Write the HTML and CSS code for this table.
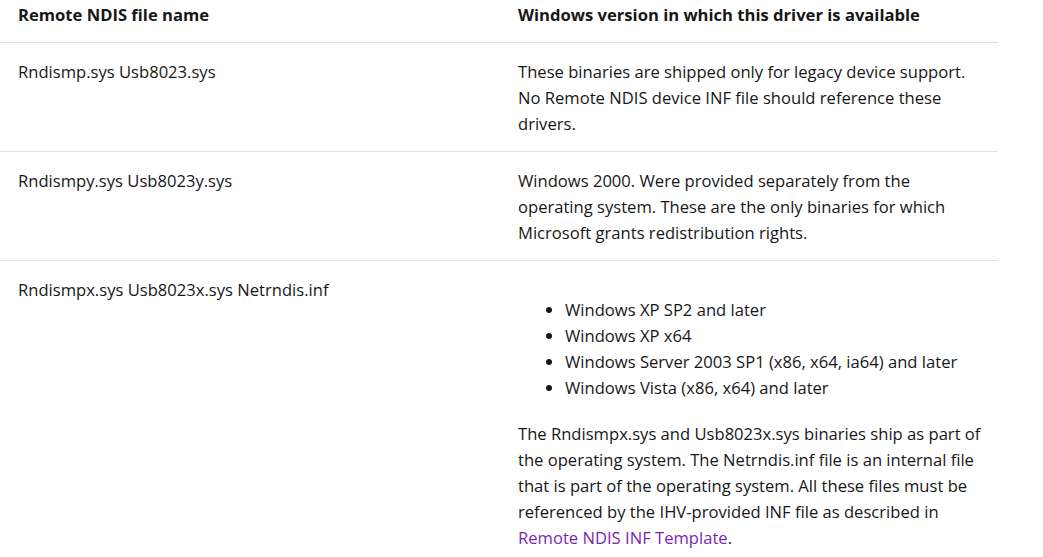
FILE: index.html
```html
<!DOCTYPE html>
<html lang="en">
<head>
<meta charset="utf-8">
<title>Remote NDIS drivers</title>
<link rel="stylesheet" href="styles.css">
</head>
<body>
<table class="drivers">
  <thead>
    <tr>
      <th class="col-name">Remote NDIS file name</th>
      <th class="col-version">Windows version in which this driver is available</th>
    </tr>
  </thead>
  <tbody>
    <tr>
      <td>Rndismp.sys Usb8023.sys</td>
      <td>These binaries are shipped only for legacy device support. No Remote NDIS device INF file should reference these drivers.</td>
    </tr>
    <tr>
      <td>Rndismpy.sys Usb8023y.sys</td>
      <td>Windows 2000. Were provided separately from the operating system. These are the only binaries for which Microsoft grants redistribution rights.</td>
    </tr>
    <tr>
      <td>Rndismpx.sys Usb8023x.sys Netrndis.inf</td>
      <td>
        <ul class="versions">
          <li>Windows XP SP2 and later</li>
          <li>Windows XP x64</li>
          <li>Windows Server 2003 SP1 (x86, x64, ia64) and later</li>
          <li>Windows Vista (x86, x64) and later</li>
        </ul>
        <p class="note">The Rndismpx.sys and Usb8023x.sys binaries ship as part of the operating system. The Netrndis.inf file is an internal file that is part of the operating system. All these files must be referenced by the IHV-provided INF file as described in <a class="visited-link" href="#">Remote NDIS INF Template</a>.</p>
      </td>
    </tr>
  </tbody>
</table>
</body>
</html>
```

FILE: styles.css
```css
html, body {
  margin: 0;
  padding: 0;
  background: #ffffff;
}

body {
  font-family: "Open Sans", "Noto Sans", "Liberation Sans", sans-serif;
  font-size: 16.6px;
  line-height: 26px;
  color: #171717;
}

.drivers {
  border-collapse: collapse;
  width: 998px;
  table-layout: fixed;
}

.drivers th,
.drivers td {
  text-align: left;
  vertical-align: top;
  padding: 16px 14px 14px 18px;
  border-bottom: 1px solid #e1e1e1;
}

.drivers th {
  font-weight: 700;
  padding-top: 2px;
  padding-bottom: 14px;
}

.col-name {
  width: 468px;
}

.versions {
  margin: 20px 0;
  padding-left: 47px;
}

.note {
  margin: 0;
}

.visited-link {
  color: #7a26b0;
  text-decoration: none;
}
```
